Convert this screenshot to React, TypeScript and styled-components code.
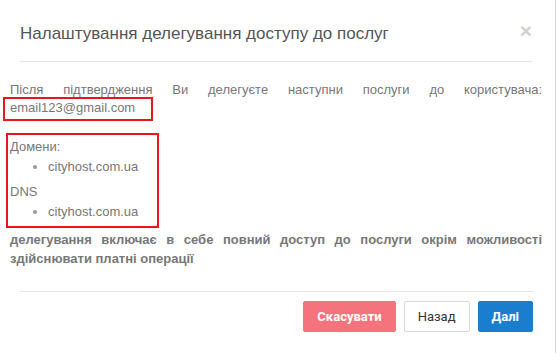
import React from 'react';
import styled, { createGlobalStyle } from 'styled-components';

const GlobalStyle = createGlobalStyle`
  html, body {
    margin: 0;
    padding: 0;
    background: #fff;
  }
  body {
    font-family: 'Liberation Sans', Arial, sans-serif;
  }
`;

const Modal = styled.div`
  width: 556px;
  height: 353px;
  box-sizing: border-box;
  border-right: 1px solid #d6d6d6;
  background: #fff;
  display: flex;
  flex-direction: column;
`;

const Header = styled.div`
  display: flex;
  align-items: center;
  justify-content: space-between;
  margin: 0 23px 0 20px;
  padding: 24px 0 17px;
  border-bottom: 1px solid #e5e5e5;
`;

const Title = styled.h4`
  margin: 0;
  font-size: 17px;
  font-weight: normal;
  color: #555;
  line-height: 20px;
`;

const Close = styled.button`
  border: none;
  background: none;
  padding: 0;
  margin-top: -8px;
  font-family: 'Liberation Sans', Arial, sans-serif;
  font-size: 21px;
  font-weight: bold;
  line-height: 1;
  color: #cfcfcf;
  cursor: pointer;
`;

const Body = styled.div`
  padding: 19px 13px 0 10px;
  font-size: 13px;
  color: #777;
`;

const Lead = styled.p`
  margin: 0;
  line-height: 18px;
  text-align: justify;
  text-align-last: justify;
`;

const Marked = styled.span`
  display: block;
  width: fit-content;
  border: 2px solid #e8161b;
  margin: -2px 0 0 -7px;
  padding: 0 16px 3px 5px;
  line-height: 17px;
`;

const MarkedBlock = styled.div`
  width: 147px;
  border: 2px solid #e8161b;
  margin: 12px 0 0 -4px;
  padding: 2px 0 4px 2px;
  line-height: 20px;
`;

const Group = styled.div`
  margin: 0;
`;

const List = styled.ul<{ $last?: boolean }>`
  margin: 0 0 ${(p) => (p.$last ? 0 : 5)}px;
  padding-left: 38px;
  li::marker {
    color: #999;
  }
`;

const Note = styled.p`
  margin: 2px 0 0;
  font-weight: bold;
  text-align: justify;
  line-height: 19px;
`;

const Footer = styled.div`
  margin: 23px 22px 0 20px;
  padding-top: 9px;
  border-top: 1px solid #e5e5e5;
  display: flex;
  justify-content: flex-end;
  gap: 8px;
`;

const Button = styled.button<{ $variant: 'danger' | 'default' | 'primary' }>`
  height: 31px;
  padding: 0 13px;
  font-family: Roboto, 'Liberation Sans', Arial, sans-serif;
  font-size: 13px;
  border-radius: 2px;
  cursor: pointer;
  font-weight: ${(p) => (p.$variant === 'default' ? 400 : 700)};
  color: ${(p) => (p.$variant === 'default' ? '#333' : '#fff')};
  background: ${(p) =>
    p.$variant === 'danger' ? '#f5737d' : p.$variant === 'primary' ? '#1b7dcd' : '#fff'};
  border: 1px solid
    ${(p) =>
      p.$variant === 'danger' ? '#f5737d' : p.$variant === 'primary' ? '#1b7dcd' : '#d9d9d9'};
`;

const services = [
  { label: 'Домени:', items: ['cityhost.com.ua'] },
  { label: 'DNS', items: ['cityhost.com.ua'] },
];

export default function App() {
  return (
    <>
      <GlobalStyle />
      <Modal>
        <Header>
          <Title>Налаштування делегування доступу до послуг</Title>
          <Close aria-label="Закрити">×</Close>
        </Header>
        <Body>
          <Lead>
            Після підтвердження Ви делегуєте наступни послуги до користувача:{' '}
            <Marked>email123@gmail.com</Marked>
          </Lead>
          <MarkedBlock>
            {services.map((s, i) => (
              <Group key={s.label}>
                {s.label}
                <List $last={i === services.length - 1}>
                  {s.items.map((it) => (
                    <li key={it}>{it}</li>
                  ))}
                </List>
              </Group>
            ))}
          </MarkedBlock>
          <Note>
            делегування включає в себе повний доступ до послуги окрім можливості здійснювати
            платні операції
          </Note>
        </Body>
        <Footer>
          <Button $variant="danger">Скасувати</Button>
          <Button $variant="default">Назад</Button>
          <Button $variant="primary">Далі</Button>
        </Footer>
      </Modal>
    </>
  );
}
